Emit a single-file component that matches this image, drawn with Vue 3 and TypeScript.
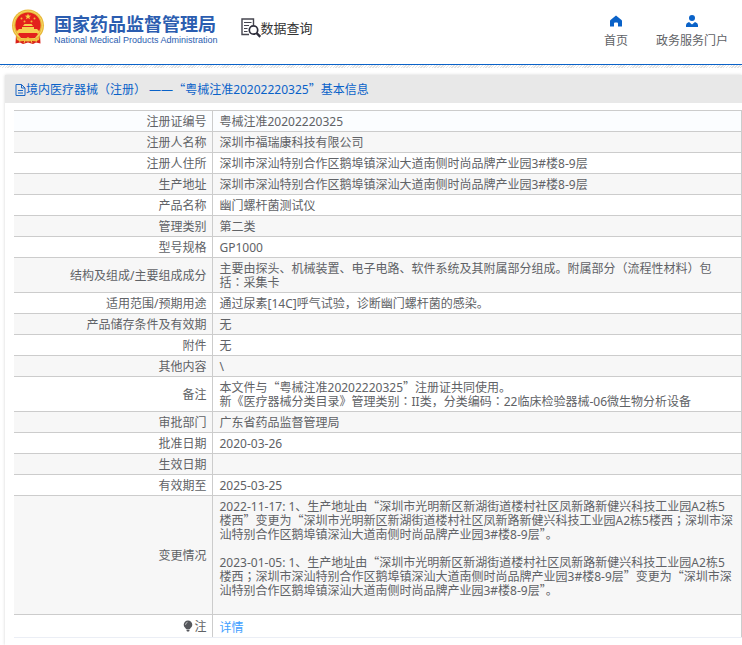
<script setup lang="ts">
interface Row {
  label: string
  value: string
}

interface Run {
  text: string
  kind: 'plain' | 'quote' | 'mark'
}

const title = '境内医疗器械（注册） ——“粤械注准20202220325”基本信息'

const address = '深圳市深汕特别合作区鹅埠镇深汕大道南侧时尚品牌产业园3#楼8-9层'
const oldAddress = '深圳市光明新区新湖街道楼村社区凤新路新健兴科技工业园A2栋5楼西'

const rows: Row[] = [
  { label: '注册证编号', value: '粤械注准20202220325' },
  { label: '注册人名称', value: '深圳市福瑞康科技有限公司' },
  { label: '注册人住所', value: address },
  { label: '生产地址', value: address },
  { label: '产品名称', value: '幽门螺杆菌测试仪' },
  { label: '管理类别', value: '第二类' },
  { label: '型号规格', value: 'GP1000' },
  {
    label: '结构及组成/主要组成成分',
    value: '主要由探头、机械装置、电子电路、软件系统及其附属部分组成。附属部分（流程性材料）包括：采集卡',
  },
  { label: '适用范围/预期用途', value: '通过尿素[14C]呼气试验，诊断幽门螺杆菌的感染。' },
  { label: '产品储存条件及有效期', value: '无' },
  { label: '附件', value: '无' },
  { label: '其他内容', value: '\\' },
  {
    label: '备注',
    value:
      '本文件与“粤械注准20202220325”注册证共同使用。\n新《医疗器械分类目录》管理类别：II类，分类编码：22临床检验器械-06微生物分析设备',
  },
  { label: '审批部门', value: '广东省药品监督管理局' },
  { label: '批准日期', value: '2020-03-26' },
  { label: '生效日期', value: '' },
  { label: '有效期至', value: '2025-03-25' },
  {
    label: '变更情况',
    value: `2022-11-17: 1、生产地址由“${oldAddress}”变更为“${oldAddress}；${address}”。\n\n2023-01-05: 1、生产地址由“${oldAddress}；${address}”变更为“${address}”。\n\n`,
  },
]

// Quotation marks take full-width glyphs; colons and semicolons take centred ones.
function runs(text: string): Run[] {
  return text
    .split(/([“”]|[：；])/)
    .filter((t) => t !== '')
    .map((t) => ({
      text: t,
      kind: /^[“”]$/.test(t) ? 'quote' : /^[：；]$/.test(t) ? 'mark' : 'plain',
    }))
}
</script>

<template>
  <div class="page" lang="zh-CN">
    <header class="header">
      <a class="brand" href="#">
        <svg class="emblem" viewBox="0 0 34 36" aria-hidden="true">
          <path d="M5 26 L4.500 34.500 L9 33.500 L12 35 L17 33.500 L22 35 L25 33.500 L29.500 34.500 L29 26Z" fill="#d9201a" />
          <circle cx="17" cy="16.500" r="16" fill="#e9b93b" />
          <circle cx="17" cy="16.500" r="14.500" fill="none" stroke="#f6d765" stroke-width="1" />
          <circle cx="17" cy="16" r="12.600" fill="#e3211c" />
          <path d="M17 4.500l.8 2.100 2.300.1-1.800 1.400.6 2.200-1.900-1.300-1.900 1.300.6-2.200-1.800-1.400 2.300-.1z" fill="#f7cf46" />
          <g fill="#f5b73c">
            <circle cx="10.500" cy="9.500" r="1" /><circle cx="23.500" cy="9.500" r="1" />
            <circle cx="13.500" cy="12.500" r="1" /><circle cx="20.500" cy="12.500" r="1" />
          </g>
          <path d="M12 17l1.500-2h7l1.500 2zM11 18h12v2H11zM6 22l2-2h18l2 2v2H6z" fill="#f6cf50" />
          <path d="M7 25h20l-3 4H10z" fill="#e3211c" />
          <path d="M5 27c3 3 6 3.500 9 3l3-2 3 2c3 .5 6 0 9-3l-1 4c-3 1.500-6 1.500-8 .5l-3-1.500-3 1.500c-2 1-5 1-8-.5z" fill="#efbd3c" />
          <path d="M8 30l1 3M26 30l-1 3M14 31l-1 3M20 31l1 3" stroke="#f5c445" stroke-width="1" />
        </svg>
        <span class="brand-text">
          <span class="brand-cn">国家药品监督管理局</span>
          <span class="brand-en">National Medical Products Administration</span>
        </span>
      </a>
      <a class="query" href="#">
        <svg class="query-icon" viewBox="0 0 20 20" aria-hidden="true">
          <path d="M8 16.500H1V1h11.500v6" fill="none" stroke="#45454f" stroke-width="1.400" />
          <path d="M3 4.500h7.500M3 7.500h5M3 10.500h3.500M3 13.500h3.500" stroke="#45454f" stroke-width="1.200" />
          <circle cx="12.500" cy="12" r="4.200" fill="#fff" stroke="#2c2c3a" stroke-width="1.700" />
          <path d="M15.500 15l3.800 3.800" stroke="#2c2c3a" stroke-width="2.400" />
        </svg>
        <span>数据查询</span>
      </a>
      <nav class="nav">
        <a class="nav-item" href="#">
          <svg class="nav-icon" viewBox="0 0 12 12" aria-hidden="true">
            <path d="M6 .5L11.500 5q.5.500.5 1v5.500H8V8.500q0-1-1-1H5q-1 0-1 1v3H0V6q0-.500.500-1z" fill="#0a62c8" />
          </svg>
          <span>首页</span>
        </a>
        <a class="nav-item" href="#">
          <svg class="nav-icon" viewBox="0 0 12 12" aria-hidden="true">
            <circle cx="6" cy="3" r="3" fill="#0a62c8" />
            <path d="M0 12v-2q0-2 3-3l3 2.500L9 7q3 1 3 3v2z" fill="#0a62c8" />
          </svg>
          <span>政务服务门户</span>
        </a>
      </nav>
    </header>
    <div class="hatch"></div>

    <main class="panel">
      <h1 class="panel-title">
        <svg class="doc-icon" viewBox="0 0 11 12" aria-hidden="true">
          <path d="M1 .5h5.500L10 4v7.500H1zM6.500.5V4H10M3 6.500h5M3 9h5" fill="none" stroke="#1b66c4" stroke-width="1" />
        </svg>
        <span><span v-for="(r, i) in runs(title)" :key="i" :class="r.kind">{{ r.text }}</span></span>
      </h1>
      <div class="panel-body">
        <table class="info">
          <colgroup>
            <col class="label-col" />
            <col />
          </colgroup>
          <tbody>
            <tr v-for="row in rows" :key="row.label">
              <th scope="row">{{ row.label }}</th>
              <td><span v-for="(r, i) in runs(row.value)" :key="i" :class="r.kind" :lang="r.kind === 'mark' ? 'ja' : undefined">{{ r.text }}</span></td>
            </tr>
            <tr class="note">
              <th scope="row">
                <svg class="bulb" viewBox="0 0 10 12" aria-hidden="true">
                  <path d="M5 .5a4.300 4.300 0 0 1 4.300 4.300C9.300 7 7.500 7.800 7 9H3C2.500 7.800.7 7 .7 4.800A4.300 4.300 0 0 1 5 .5zM3.500 9.500h3v1L6 11.500H4l-.500-1z" fill="#55575c" />
                  <path d="M2.500 4.800Q2.700 2.700 4.500 2.300" fill="none" stroke="#ddd" stroke-width=".8" />
                </svg>注
              </th>
              <td><a class="detail" href="#">详情</a></td>
            </tr>
          </tbody>
        </table>
      </div>
    </main>
  </div>
</template>

<style>
body {
  margin: 0;
  background: #fff;
}
</style>

<style scoped>
.page {
  font-family: "Noto Sans", "Noto Sans CJK SC", sans-serif;
  font-size: 12px;
  line-height: 14px;
  color: #606266;
}

a {
  color: inherit;
  text-decoration: none;
}

.header {
  display: flex;
  align-items: flex-start;
  height: 65px;
  padding: 0 14px 0 11px;
  box-sizing: border-box;
  border-bottom: 1px solid #0a62c8;
}

.brand {
  display: flex;
  gap: 9px;
  padding-top: 9px;
}

.emblem {
  width: 34px;
  height: 36px;
}

.brand-text {
  display: flex;
  flex-direction: column;
  padding-top: 3px;
  color: #2b5db0;
  white-space: nowrap;
}

.brand-cn {
  font-family: "Noto Sans CJK SC", sans-serif;
  font-size: 18px;
  line-height: 22px;
  font-weight: 700;
}

.brand-en {
  font-family: "Liberation Sans", sans-serif;
  font-size: 9px;
  line-height: 12px;
}

.query {
  display: flex;
  align-items: center;
  margin-left: 23px;
  padding-top: 18px;
  font-size: 13px;
  line-height: 20px;
  color: #333;
  white-space: nowrap;
}

.query-icon {
  width: 20px;
  height: 20px;
}

.nav {
  display: flex;
  gap: 28px;
  margin-left: auto;
  padding-top: 15px;
}

.nav-item {
  display: flex;
  flex-direction: column;
  align-items: center;
  gap: 7px;
  white-space: nowrap;
}

.nav-icon {
  width: 12px;
  height: 12px;
}

.hatch {
  height: 3px;
  background: repeating-linear-gradient(135deg, #fff 0 1px, #e2e2e2 1px 2px);
}

.panel {
  margin: 7px 0 0 5px;
  padding-bottom: 7px;
  box-shadow: 0 0 3px #d4d4d4;
}

.panel-title {
  display: flex;
  align-items: center;
  height: 28px;
  margin: 0;
  padding: 2px 0 0 10px;
  box-sizing: border-box;
  background: #e8e8e8;
  color: #0a62c8;
  font-size: 12px;
  font-weight: 400;
  white-space: nowrap;
}

.doc-icon {
  width: 11px;
  height: 12px;
}

.panel-body {
  padding: 7px 0 0 9px;
}

.info {
  width: 100%;
  table-layout: fixed;
  border-collapse: collapse;
  border-top: 1px solid #ccc;
}

.label-col {
  width: 198px;
}

.info th,
.info td {
  height: 14px;
  border-right: 1px solid #ccc;
  border-bottom: 1px solid #ccc;
  font-weight: 400;
  vertical-align: middle;
}

.info th {
  padding: 4px 5px 2px;
  text-align: right;
}

.info td {
  padding: 4px 6px 2px 7px;
  text-align: left;
  white-space: pre-line;
}

.info tr:first-child {
  background: #fbfdff;
}

.info tr:nth-child(even) {
  background: #f7f7f7;
}

.info .note th,
.info .note td {
  height: 16px;
  border-bottom-color: #ebeef5;
}

.info .note td {
  height: 14px;
  padding-top: 6px;
}

.quote {
  font-family: "Noto Sans CJK SC", sans-serif;
  line-height: 0;
}

.mark {
  font-family: "Noto Sans CJK JP", sans-serif;
  line-height: 0;
}

.bulb {
  width: 10px;
  height: 12px;
  margin-right: 1px;
  vertical-align: -1px;
}

.detail {
  color: #409eff;
}
</style>
